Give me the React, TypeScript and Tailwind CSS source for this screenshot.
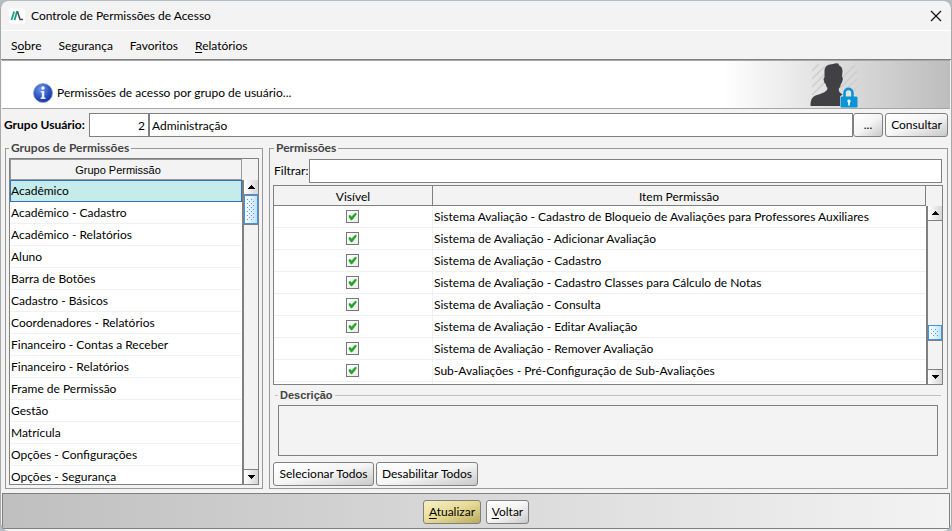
import { useState } from "react";
import type { ReactNode } from "react";
import clsx from "clsx";

const menus = [
  { before: "S", key: "o", after: "bre" },
  { before: "Segurança", key: "", after: "" },
  { before: "Favoritos", key: "", after: "" },
  { before: "", key: "R", after: "elatórios" },
];

const groups = [
  "Acadêmico",
  "Acadêmico - Cadastro",
  "Acadêmico - Relatórios",
  "Aluno",
  "Barra de Botões",
  "Cadastro - Básicos",
  "Coordenadores - Relatórios",
  "Financeiro - Contas a Receber",
  "Financeiro - Relatórios",
  "Frame de Permissão",
  "Gestão",
  "Matrícula",
  "Opções - Configurações",
  "Opções - Segurança",
];

const items = [
  "Sistema Avaliação - Cadastro de Bloqueio de Avaliações para Professores Auxiliares",
  "Sistema de Avaliação - Adicionar Avaliação",
  "Sistema de Avaliação - Cadastro",
  "Sistema de Avaliação - Cadastro Classes para Cálculo de Notas",
  "Sistema de Avaliação - Consulta",
  "Sistema de Avaliação - Editar Avaliação",
  "Sistema de Avaliação - Remover Avaliação",
  "Sub-Avaliações - Pré-Configuração de Sub-Avaliações",
];

function Button({ children, gold, className }: { children: ReactNode; gold?: boolean; className?: string }) {
  return (
    <button
      type="button"
      className={clsx(
        "h-6 shrink-0 whitespace-nowrap rounded-[3px] border border-[#808080] px-1 leading-4",
        gold
          ? "bg-linear-to-br from-[#f7f0c4] via-[#e6da94] to-[#b9ab5e]"
          : "bg-linear-to-br from-white via-[#f5f5f5] to-[#c9c9c9]",
        className
      )}
    >
      {children}
    </button>
  );
}

function ArrowButton({ up }: { up?: boolean }) {
  return (
    <button
      type="button"
      aria-label={up ? "Rolar para cima" : "Rolar para baixo"}
      className={clsx(
        "flex h-[15px] shrink-0 items-center justify-center border-[#808080] bg-linear-to-r from-white to-[#d6d6d6]",
        up ? "border-b" : "border-t"
      )}
    >
      <svg width="9" height="4" viewBox="0 0 9 4" shapeRendering="crispEdges">
        <path d={up ? "M4 0h1v1h1v1h1v1h1v1H1V3h1V2h1V1h1z" : "M1 0h7v1H7v1H6v1H5v1H4V3H3V2H2V1H1z"} fill="#000" />
      </svg>
    </button>
  );
}

function ScrollBar({ before, after, thumb }: { before: string; after: string; thumb: string }) {
  return (
    <div className="flex w-4 shrink-0 flex-col border-l-2 border-[#808080] bg-[#f3f3f3]">
      <ArrowButton up />
      <div className={before} />
      <div className={clsx("shrink-0 border border-[#3c96f0] bg-linear-to-r from-white to-[#c5e0fb] px-[2px] py-[3px]", thumb)}>
        <svg className="block h-full w-full" shapeRendering="crispEdges">
          <defs>
            <pattern id="grip" width="4" height="4" patternUnits="userSpaceOnUse">
              <path d="M0 0h1v1H0zM2 2h1v1H2z" fill="#4aa0f5" />
            </pattern>
          </defs>
          <rect width="100%" height="100%" fill="url(#grip)" />
        </svg>
      </div>
      <div className={clsx("border-t border-[#808080]", after)} />
      <ArrowButton />
    </div>
  );
}

function CheckBox({ label, checked, onChange }: { label: string; checked: boolean; onChange: () => void }) {
  return (
    <span className="inline-grid size-[13px] place-items-center">
      <input
        type="checkbox"
        aria-label={label}
        checked={checked}
        onChange={onChange}
        className="peer col-start-1 row-start-1 size-[13px] appearance-none border border-[#777] bg-linear-to-br from-white to-[#ececec]"
      />
      <svg
        width="9"
        height="9"
        viewBox="0 0 9 9"
        className="pointer-events-none invisible col-start-1 row-start-1 peer-checked:visible"
      >
        <path d="M1 3.500h1.500L3.500 5 7 1.200h1.200v1.600L4 8H3L1 5.200z" fill="#22a428" stroke="#22a428" strokeWidth="0.500" />
      </svg>
    </span>
  );
}

function Logo() {
  return (
    <svg width="16" height="16" viewBox="0 0 16 16" className="shrink-0">
      <rect width="16" height="16" rx="3" fill="#fff" />
      <path d="M2.500 12 5.200 3.500" stroke="#1aa183" strokeWidth="1.800" />
      <path d="M5.500 12 8.200 3" stroke="#1aa183" strokeWidth="1.900" />
      <path d="M8.500 3.500 11 11.500H14" fill="none" stroke="#3f4b4d" strokeWidth="1.500" />
    </svg>
  );
}

function InfoIcon() {
  return (
    <svg width="20" height="20" viewBox="0 0 20 20" className="shrink-0">
      <defs>
        <radialGradient id="info" cx="0.4" cy="0.3" r="0.75">
          <stop offset="0" stopColor="#6f97e6" />
          <stop offset="0.6" stopColor="#2a52be" />
          <stop offset="1" stopColor="#16309a" />
        </radialGradient>
      </defs>
      <circle cx="10" cy="10" r="9.500" fill="url(#info)" stroke="#8b9bcb" strokeWidth="0.8" />
      <circle cx="10" cy="5" r="1.700" fill="#fff" />
      <path d="M7.800 8h3.500v6.500h1.200V16H7.600v-1.500h1.200v-5h-1z" fill="#e8edf8" />
    </svg>
  );
}

function UserLock() {
  return (
    <svg width="48" height="46" viewBox="0 0 48 46" className="shrink-0">
      <g stroke="#cdcdcd" strokeWidth="1.500">
        <path d="M2 9 9 2M2 17 15 4M2 25 16 11M2 33 18 17M30 18 45 3M30 26 47 9M33 30 47 17M38 33 47 25" />
      </g>
      <path
        d="M14.500 8C15 4.500 17 3 20 2.500l3-.5c2.500-1 4.500-1 6 0l-.5 1c2.500 1 4 3 4 6l-.5 6c1 .5 1 2 .5 3.500s-.8 3-1.700 3.500c-.3 2-.8 3.500-2 4.500v2c1 3 4.200 4 4.200 4v2H31V44H.5c0-6 1.500-9 5-10.500 4-1.500 9-2.500 11.500-5.500l.5-2c-1-1-1.600-2.500-1.800-4-1-.5-1.500-2-1.900-3.500s-.3-2.500.7-3z"
        fill="#414042"
      />
      <path d="M30 35.500c0-1.500 1-2.500 2.500-2.500v-1c0-3.500 2-6.500 6-6.500s6 3 6 6.500v1c1.500 0 2.500 1 2.500 2.500v9.500H30z" fill="#e4e4e4" />
      <path d="M34.500 35v-4c0-5.500 8-5.500 8 0v4" fill="none" stroke="#0a94d6" strokeWidth="2.600" />
      <rect x="30.500" y="34.500" width="17" height="11" rx="1.200" fill="#0a94d6" />
      <path d="M39 37.500a1.700 1.700 0 0 1 .8 3.200v2.800h-1.600v-2.800a1.700 1.700 0 0 1 .8-3.200z" fill="#fff" />
    </svg>
  );
}

export default function App() {
  const [selected, setSelected] = useState(0);
  const [filter, setFilter] = useState("");
  const [visible, setVisible] = useState(items.map(() => true));

  const toggle = (index: number) => setVisible(visible.map((v, i) => (i === index ? !v : v)));

  return (
    <div className="h-screen bg-[#b4bcc2] pt-px font-[Lato,'Open_Sans',sans-serif] text-xs text-black">
      <div className="flex h-full flex-col overflow-hidden rounded-lg border-x border-[#a8a8a8] bg-[#f3f3f3]">
        <header className="flex h-[30px] shrink-0 items-center border-b border-white pl-2 pr-[9px]">
          <Logo />
          <h1 className="ml-[6px]">Controle de Permissões de Acesso</h1>
          <button type="button" aria-label="Fechar" className="ml-auto">
            <svg width="12" height="12" viewBox="0 0 12 12">
              <path d="M1 1 11 11M11 1 1 11" stroke="#111" strokeWidth="1.200" />
            </svg>
          </button>
        </header>

        <nav className="flex h-[29px] shrink-0 items-center gap-[17px] border-b border-[#808080] px-[10px] pt-px">
          {menus.map((m) => (
            <button type="button" key={m.before + m.key}>
              {m.before}
              {m.key && <u className="underline-offset-2">{m.key}</u>}
              {m.after}
            </button>
          ))}
        </nav>

        <section className="mx-px flex h-[49px] shrink-0 items-end border-y border-[#a6a6a6] bg-linear-to-r from-white from-76% to-[#bdbdbd] pl-[31px]">
          <span className="flex items-center gap-1 pb-[5px]">
            <InfoIcon />
            <span>Permissões de acesso por grupo de usuário...</span>
          </span>
          <span className="ml-auto mr-[92px]">
            <UserLock />
          </span>
        </section>

        <div className="flex shrink-0 items-center px-[3px] py-1">
          <label htmlFor="grupo" className="w-[85px] shrink-0 whitespace-nowrap font-bold">
            Grupo Usuário:
          </label>
          <input id="grupo" defaultValue="2" className="h-6 w-[60px] border border-[#808080] bg-white px-[3px] text-right" />
          <input
            aria-label="Nome do grupo"
            defaultValue="Administração"
            className="h-6 min-w-0 flex-1 border border-[#808080] bg-white px-[2px]"
          />
          <Button className="w-[30px]">...</Button>
          <Button className="ml-[2px] w-[63px]">Consultar</Button>
        </div>

        <main className="flex min-h-0 flex-1 gap-[6px] pb-1 pl-1 pr-[3px]">
          <fieldset className="flex min-h-0 w-[258px] shrink-0 flex-col border border-[#999] p-[3px]">
            <legend className="px-[2px] font-bold leading-[14px] text-[#444]">Grupos de Permissões</legend>
            <div className="flex min-h-0 flex-1 border border-[#808080] bg-white">
              <div className="min-w-0 flex-1 overflow-hidden">
                <table className="w-full border-separate border-spacing-0">
                  <thead>
                    <tr>
                      <th className="h-[21px] border border-[#999] bg-[#f3f3f3] p-0 pr-4 pt-px text-[11px] font-normal leading-4 font-['Liberation_Sans',sans-serif]">
                        Grupo Permissão
                      </th>
                    </tr>
                  </thead>
                  <tbody>
                    {groups.map((g, i) => (
                      <tr key={g} onClick={() => setSelected(i)}>
                        <td
                          className={clsx(
                            "h-[22px] whitespace-nowrap border p-0 leading-4",
                            i === selected ? "border-[#2f6fc4] bg-[#c6ebeb]" : "border-transparent border-b-[#f0f0f0]"
                          )}
                        >
                          {g}
                        </td>
                      </tr>
                    ))}
                  </tbody>
                </table>
              </div>
              <div className="flex flex-col">
                <div className="h-[21px] shrink-0 bg-[#f3f3f3]" />
                <div className="flex min-h-0 flex-1">
                  <ScrollBar before="flex-none" thumb="h-[29px]" after="flex-1" />
                </div>
              </div>
            </div>
          </fieldset>

          <fieldset className="flex min-h-0 min-w-0 flex-1 flex-col border border-[#999] pb-[2px] pl-[3px] pr-1 pt-1">
            <legend className="ml-px px-[2px] font-bold leading-[14px] text-[#444]">Permissões</legend>
            <div className="flex shrink-0 items-center pr-px">
              <label htmlFor="filtrar" className="w-9 shrink-0 pl-px">
                Filtrar:
              </label>
              <input
                id="filtrar"
                value={filter}
                onChange={(e) => setFilter(e.target.value)}
                className="h-6 min-w-0 flex-1 border border-[#808080] bg-white px-[3px]"
              />
            </div>

            <div className="mt-[2px] flex min-h-0 flex-1 border border-[#808080] bg-white">
              <div className="min-w-0 flex-1 overflow-hidden">
                <table className="w-full table-fixed border-separate border-spacing-0">
                  <thead>
                    <tr>
                      <th className="h-5 w-[159px] border-b border-r border-[#808080] bg-[#f3f3f3] p-0 pt-[2px] font-normal leading-4">
                        Visível
                      </th>
                      <th className="h-5 border-b border-r border-[#808080] bg-[#f3f3f3] p-0 pt-[2px] font-normal leading-4">
                        Item Permissão
                      </th>
                    </tr>
                  </thead>
                  <tbody>
                    {items.map((item, i) => (
                      <tr key={item}>
                        <td className="h-[22px] border-b border-r border-[#f0f0f0] p-0 pr-[2px]">
                          <div className="flex justify-center">
                            <CheckBox label={item} checked={visible[i]} onChange={() => toggle(i)} />
                          </div>
                        </td>
                        <td className="h-[22px] whitespace-nowrap border-b border-[#f0f0f0] py-0 pl-px pr-0 leading-4">{item}</td>
                      </tr>
                    ))}
                    <tr>
                      <td className="h-[22px] border-r border-[#f0f0f0] p-0" />
                      <td className="h-[22px] p-0" />
                    </tr>
                  </tbody>
                </table>
              </div>
              <div className="flex flex-col">
                <div className="h-5 shrink-0 bg-[#f3f3f3]" />
                <div className="flex min-h-0 flex-1">
                  <ScrollBar before="flex-[104]" thumb="h-[15px]" after="flex-[28]" />
                </div>
              </div>
            </div>

            <fieldset className="mx-[2px] mt-[3px] shrink-0 border-t border-[#c0c0c0] px-[3px] pb-[6px] pt-[3px]">
              <legend className="px-[2px] text-[11px] font-bold leading-[14px] text-[#444] font-['Liberation_Sans',sans-serif]">
                Descrição
              </legend>
              <textarea
                aria-label="Descrição"
                readOnly
                className="block h-[51px] w-full resize-none border border-[#808080] bg-[#f3f3f3] p-1"
              />
            </fieldset>

            <div className="flex shrink-0 gap-[2px]">
              <Button className="w-[101px]">Selecionar Todos</Button>
              <Button className="w-[102px]">Desabilitar Todos</Button>
            </div>
          </fieldset>
        </main>

        <footer className="mx-px mb-[2px] flex h-9 shrink-0 items-center justify-center gap-[5px] border border-[#808080] bg-linear-to-r from-[#bfbfbf] to-[#f3f3f3] pt-[2px]">
          <Button gold className="w-[58px]">
            <u className="underline-offset-2">A</u>tualizar
          </Button>
          <Button className="w-[43px]">
            <u className="underline-offset-2">V</u>oltar
          </Button>
        </footer>
      </div>
    </div>
  );
}
